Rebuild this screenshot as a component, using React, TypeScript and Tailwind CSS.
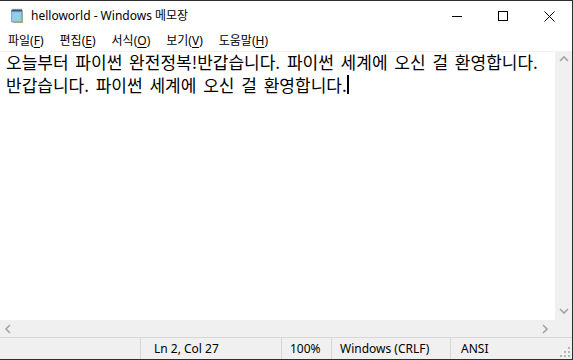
import React from "react";

const NotepadIcon = () => (
  <svg width="16" height="16" viewBox="0 0 16 16">
    <path d="M4 2.5h10v12.5H4z" fill="#c9b27c" />
    <path d="M2.5 2h10.5v12H2.5z" fill="#8fc3e6" stroke="#5a8fb6" strokeWidth="0.6" />
    <path d="M2.5 2h10.5v1.6H2.5z" fill="#3d6f99" />
    {[4, 6, 8, 10, 12].map((x) => (
      <rect key={x} x={x - 0.4} y="0.8" width="0.9" height="2" fill="#333" />
    ))}
    {[6, 8, 10, 12].map((y) => (
      <path key={y} d={`M4 ${y}h7.5`} stroke="#b8dcf2" strokeWidth="0.6" />
    ))}
  </svg>
);

const Chevron = ({ dir }: { dir: "up" | "down" | "left" | "right" }) => {
  const d = {
    up: "M1 6l4-4 4 4",
    down: "M1 2l4 4 4-4",
    left: "M6 1L2 5l4 4",
    right: "M2 1l4 4-4 4",
  }[dir];
  return (
    <svg width="10" height="10" viewBox="0 0 10 10">
      <path d={d} fill="none" stroke="#a3a3a3" strokeWidth="1.6" />
    </svg>
  );
};

const MenuItem = ({ label, k }: { label: string; k: string }) => (
  <span>
    {label}(<span className="underline underline-offset-2">{k}</span>)
  </span>
);

export default function App() {
  const ui = { fontFamily: '"Noto Sans", "Noto Sans CJK KR", sans-serif' };
  const body = { fontFamily: '"Noto Sans CJK KR", sans-serif' };

  return (
    <div className="w-[573px] h-[360px] flex flex-col bg-white border-t border-r border-b border-[#2e2e2e] overflow-hidden text-black" style={ui}>
      {/* title bar */}
      <div className="h-[30px] flex items-center shrink-0">
        <div className="pl-[9px] pr-[6px] flex items-center">
          <NotepadIcon />
        </div>
        <span className="text-[12px] leading-none">helloworld - Windows 메모장</span>
        <div className="ml-auto flex h-full">
          <div className="w-[46px] flex items-center justify-center">
            <div className="w-[10px] h-px bg-black" />
          </div>
          <div className="w-[46px] flex items-center justify-center">
            <div className="w-[10px] h-[10px] border border-black" />
          </div>
          <div className="w-[46px] flex items-center justify-center">
            <svg width="11" height="11" viewBox="0 0 11 11">
              <path d="M0.5 0.5l10 10M10.5 0.5l-10 10" stroke="#000" strokeWidth="1" />
            </svg>
          </div>
        </div>
      </div>

      {/* menu bar */}
      <div className="h-[20px] flex items-center gap-[16px] pl-[8px] text-[12px] shrink-0">
        <MenuItem label="파일" k="F" />
        <MenuItem label="편집" k="E" />
        <MenuItem label="서식" k="O" />
        <MenuItem label="보기" k="V" />
        <MenuItem label="도움말" k="H" />
      </div>

      {/* editor */}
      <div className="flex-1 flex flex-col border-t border-[#f0f0f0] min-h-0">
        <div className="flex-1 flex min-h-0">
          <div className="flex-1 px-[6px] -mt-[2px] text-[17px] leading-[23px] [word-spacing:3px]" style={body}>
            <div className="whitespace-nowrap">오늘부터 파이썬 완전정복!반갑습니다. 파이썬 세계에 오신 걸 환영합니다.</div>
            <div className="whitespace-nowrap flex items-center">
              반갑습니다. 파이썬 세계에 오신 걸 환영합니다.
              <span className="inline-block w-[2px] h-[19px] bg-black" />
            </div>
          </div>
          <div className="w-[17px] bg-[#f0f0f0] flex flex-col items-center justify-between py-[3px]">
            <Chevron dir="up" />
            <Chevron dir="down" />
          </div>
        </div>
        <div className="h-[17px] bg-[#f0f0f0] flex items-center justify-between pl-[4px] pr-[21px] shrink-0">
          <Chevron dir="left" />
          <Chevron dir="right" />
        </div>
      </div>

      {/* status bar */}
      <div className="h-[22px] bg-[#f0f0f0] border-t border-[#d7d7d7] flex text-[12px] shrink-0 relative">
        <div className="w-[141px] border-r border-[#d7d7d7]" />
        <div className="w-[141px] border-r border-[#d7d7d7] flex items-center pl-[13px]">Ln 2, Col 27</div>
        <div className="w-[50px] border-r border-[#d7d7d7] flex items-center pl-[8px]">100%</div>
        <div className="w-[119px] border-r border-[#d7d7d7] flex items-center pl-[8px]">Windows (CRLF)</div>
        <div className="flex-1 flex items-center pl-[10px]">ANSI</div>
        <svg className="absolute right-[2px] bottom-[2px]" width="10" height="10" viewBox="0 0 10 10">
          {[[8, 0], [4, 4], [8, 4], [0, 8], [4, 8], [8, 8]].map(([x, y]) => (
            <rect key={`${x}-${y}`} x={x} y={y} width="2" height="2" fill="#b4b4b4" />
          ))}
        </svg>
      </div>
    </div>
  );
}
